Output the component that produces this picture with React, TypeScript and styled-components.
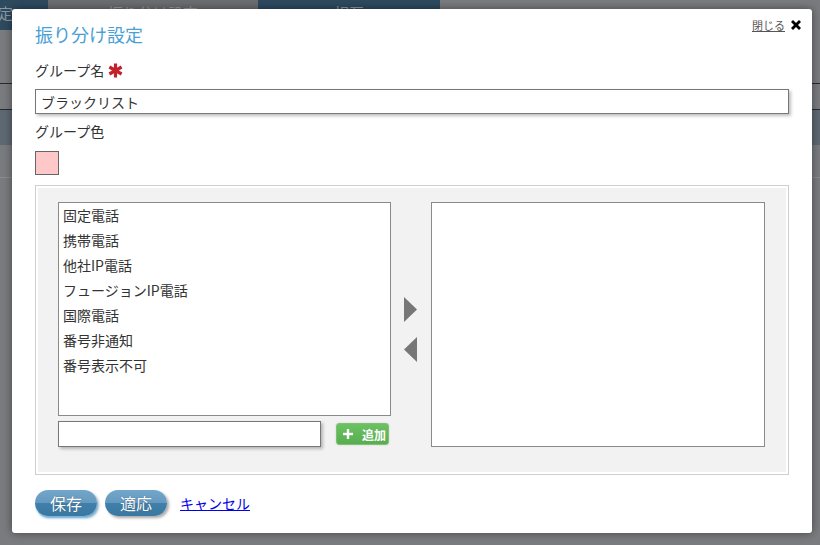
import React from 'react';
import styled, { createGlobalStyle } from 'styled-components';

const GlobalStyle = createGlobalStyle`
  html, body {
    margin: 0;
    padding: 0;
    background: #7a7b7f;
    font-family: "Noto Sans CJK JP", "Noto Sans", "Liberation Sans", sans-serif;
  }
`;

const Page = styled.div`
  position: relative;
  width: 820px;
  height: 545px;
  overflow: hidden;
  background: #7a7b7f;
`;

const TabBar = styled.div`
  display: flex;
  height: 30px;
`;

const Tab = styled.div<{ $width: number; $dark?: boolean; $shift?: number }>`
  width: ${(p) => p.$width}px;
  background: ${(p) => (p.$dark ? '#2e4a5f' : '#6c6d70')};
  color: ${(p) => (p.$dark ? '#8a98a4' : '#9a9b9e')};
  font-size: 15px;
  line-height: 26px;
  text-align: center;
  text-indent: ${(p) => p.$shift || 0}px;
  overflow: hidden;
  white-space: nowrap;
`;

const BgRow = styled.div<{ $height: number; $bg?: string; $line?: string }>`
  height: ${(p) => p.$height}px;
  background: ${(p) => p.$bg || '#7a7b7f'};
  border-bottom: 1px solid ${(p) => p.$line || 'transparent'};
`;

const Modal = styled.div`
  position: absolute;
  left: 12px;
  top: 9px;
  width: 800px;
  height: 524px;
  box-sizing: border-box;
  background: #fff;
  border-radius: 3px;
  box-shadow: 0 0 8px rgba(0, 0, 0, 0.45);
  padding: 13px 23px 0 23px;
`;

const Header = styled.div`
  position: relative;
  height: 24px;
`;

const Title = styled.h2`
  margin: 0;
  font-size: 18px;
  font-weight: normal;
  line-height: 24px;
  color: #4a9fd4;
`;

const CloseLink = styled.a`
  position: absolute;
  top: -5px;
  right: -12px;
  display: flex;
  align-items: center;
  gap: 6px;
  font-size: 11px;
  color: #555;
  text-decoration: underline;
  cursor: pointer;
`;

const Label = styled.div`
  display: flex;
  align-items: center;
  gap: 4px;
  font-size: 14px;
  line-height: 22px;
  color: #333;
`;

const TextInput = styled.input<{ $width?: number }>`
  display: block;
  box-sizing: border-box;
  width: ${(p) => (p.$width ? `${p.$width}px` : '100%')};
  height: ${(p) => (p.$width ? 26 : 25)}px;
  border: 1px solid #777;
  border-radius: 0;
  padding: 0 5px;
  font-family: inherit;
  font-size: 14px;
  color: #333;
  background: #fff;
  box-shadow: 2px 2px 3px rgba(0, 0, 0, 0.25);
  outline: none;
`;

const Swatch = styled.div<{ $color: string }>`
  width: 24px;
  height: 24px;
  box-sizing: border-box;
  background: ${(p) => p.$color};
  border: 1px solid #666;
`;

const Panel = styled.div`
  box-sizing: border-box;
  height: 290px;
  border: 1px solid #cfcfcf;
  box-shadow: inset 0 0 0 2px #fff;
  background: #f2f2f2;
  padding: 16px 23px 26px 22px;
  display: grid;
  grid-template-columns: 333px 40px 1fr;
`;

const LeftColumn = styled.div`
  display: flex;
  flex-direction: column;
  gap: 5px;
`;

const ListBox = styled.ul<{ $height: number }>`
  margin: 0;
  padding: 0 4px;
  list-style: none;
  box-sizing: border-box;
  height: ${(p) => p.$height}px;
  background: #fff;
  border: 1px solid #8a8a8a;
  overflow: hidden;
`;

const ListItem = styled.li`
  font-size: 14px;
  line-height: 25px;
  color: #333;
  white-space: nowrap;
`;

const AddRow = styled.div`
  display: flex;
  align-items: center;
  gap: 15px;
`;

const AddButton = styled.button`
  display: flex;
  align-items: center;
  gap: 9px;
  height: 22px;
  width: 53px;
  box-sizing: border-box;
  padding: 0 0 0 6px;
  border: 1px solid #7cc273;
  border-radius: 3px;
  background: linear-gradient(#6cc163, #58ad4f);
  color: #fff;
  font-family: inherit;
  font-size: 12px;
  font-weight: bold;
  cursor: pointer;
  box-shadow: 0 0 2px rgba(0, 0, 0, 0.15);
`;

const Arrows = styled.div`
  display: flex;
  flex-direction: column;
  align-items: center;
  justify-content: center;
  gap: 15px;
  padding-top: 9px;
  padding-right: 2px;
`;

const Footer = styled.div`
  display: flex;
  align-items: center;
  gap: 8px;
  margin-top: 15px;
`;

const PillButton = styled.button<{ $focused?: boolean }>`
  width: 62px;
  height: 26px;
  border: none;
  border-radius: 13px;
  background: linear-gradient(#72a6ca 0%, #6699bf 48%, #3f7fa9 52%, #3a78a2 100%);
  color: #fff;
  font-family: inherit;
  font-size: 16px;
  line-height: 26px;
  padding: 0;
  cursor: pointer;
  text-shadow: 0 0 1px rgba(0, 0, 0, 0.4);
  box-shadow: ${(p) =>
    p.$focused
      ? '1px 2px 2px rgba(70, 170, 230, 0.7), 2px 2px 3px rgba(0,0,0,0.25)'
      : '2px 2px 3px rgba(0, 0, 0, 0.35)'};
`;

const CancelLink = styled.a`
  margin-left: 5px;
  font-size: 14px;
  color: #0000ee;
  text-decoration: underline;
  cursor: pointer;
`;

const Field = styled.div<{ $mt: number }>`
  margin-top: ${(p) => p.$mt}px;
`;

const items = ['固定電話', '携帯電話', '他社IP電話', 'フュージョンIP電話', '国際電話', '番号非通知', '番号表示不可'];

const Asterisk = () => (
  <svg width="15" height="15" viewBox="0 0 15 15">
    <g stroke="#c4202b" strokeWidth="3.2" strokeLinecap="butt">
      <line x1="7.5" y1="0.5" x2="7.5" y2="14.5" />
      <line x1="1.4" y1="4" x2="13.6" y2="11" />
      <line x1="1.4" y1="11" x2="13.6" y2="4" />
    </g>
  </svg>
);

const CloseIcon = () => (
  <svg width="10" height="10" viewBox="0 0 10 10">
    <g stroke="#000" strokeWidth="2.8">
      <line x1="1" y1="1" x2="9" y2="9" />
      <line x1="9" y1="1" x2="1" y2="9" />
    </g>
  </svg>
);

const Triangle = ({ dir }: { dir: 'left' | 'right' }) => (
  <svg width="13" height="25" viewBox="0 0 13 25">
    <polygon points={dir === 'right' ? '0,0 13,12.5 0,25' : '13,0 0,12.5 13,25'} fill="#777" />
  </svg>
);

const PlusIcon = () => (
  <svg width="10" height="10" viewBox="0 0 10 10">
    <g stroke="#fff" strokeWidth="2.4">
      <line x1="5" y1="0" x2="5" y2="10" />
      <line x1="0" y1="5" x2="10" y2="5" />
    </g>
  </svg>
);

export default function App() {
  return (
    <Page>
      <GlobalStyle />
      <TabBar>
        <Tab $width={48} $dark $shift={-52}>設定</Tab>
        <Tab $width={210}>振り分け設定</Tab>
        <Tab $width={182} $dark>相互</Tab>
      </TabBar>
      <BgRow $height={53} $line="#2a2a2a" />
      <BgRow $height={25} $line="#2a2a2a" />
      <BgRow $height={34} $bg="#5e6872" />
      <BgRow $height={32} $line="#8a8b8e" />

      <Modal>
        <Header>
          <Title>振り分け設定</Title>
          <CloseLink>
            閉じる
            <CloseIcon />
          </CloseLink>
        </Header>

        <Field $mt={13}>
          <Label>
            グループ名
            <Asterisk />
          </Label>
        </Field>
        <Field $mt={8}>
          <TextInput defaultValue="ブラックリスト" />
        </Field>
        <Field $mt={6}>
          <Label>グループ色</Label>
        </Field>
        <Field $mt={9}>
          <Swatch $color="#ffc8c8" />
        </Field>

        <Field $mt={10}>
          <Panel>
            <LeftColumn>
              <ListBox $height={214}>
                {items.map((it) => (
                  <ListItem key={it}>{it}</ListItem>
                ))}
              </ListBox>
              <AddRow>
                <TextInput $width={263} />
                <AddButton>
                  <PlusIcon />
                  追加
                </AddButton>
              </AddRow>
            </LeftColumn>
            <Arrows>
              <Triangle dir="right" />
              <Triangle dir="left" />
            </Arrows>
            <ListBox $height={245} />
          </Panel>
        </Field>

        <Footer>
          <PillButton $focused>保存</PillButton>
          <PillButton>適応</PillButton>
          <CancelLink>キャンセル</CancelLink>
        </Footer>
      </Modal>
    </Page>
  );
}
